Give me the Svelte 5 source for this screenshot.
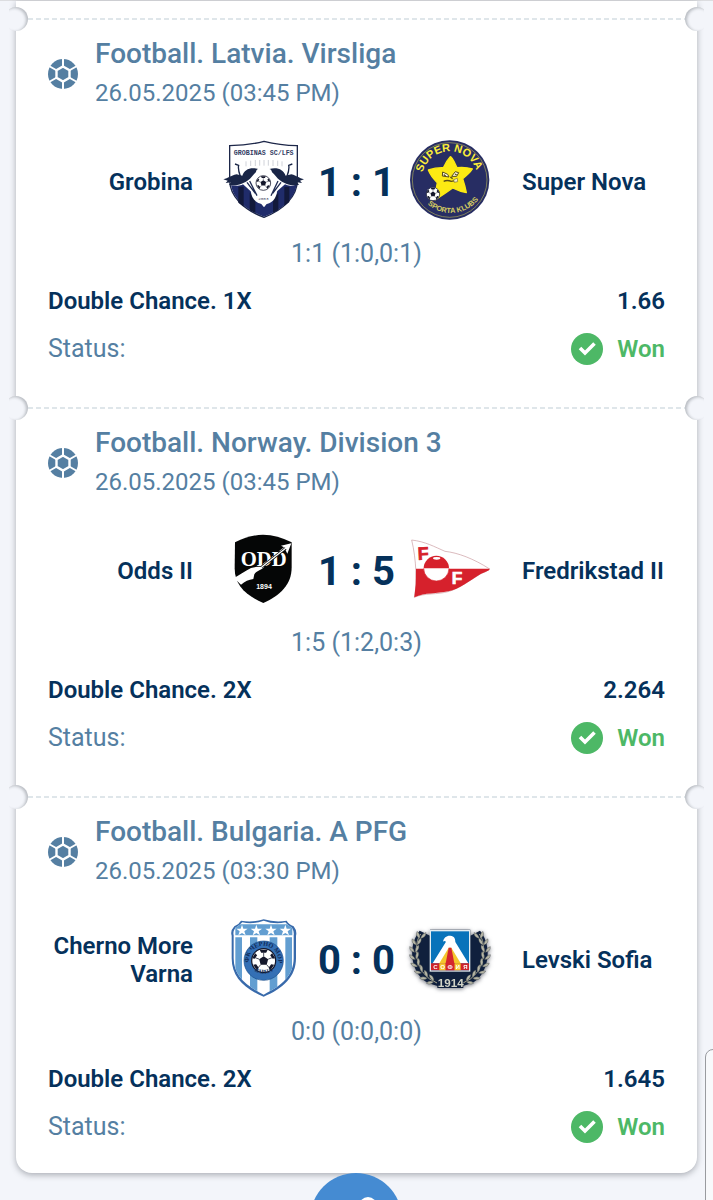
<script>
  const matches = [
    {
      league: 'Football. Latvia. Virsliga', time: '26.05.2025 (03:45 PM)',
      home: 'Grobina', away: 'Super Nova', score: '1 : 1', periods: '1:1 (1:0,0:1)',
      bet: 'Double Chance. 1X', odds: '1.66', homeCrest: 'grobina', awayCrest: 'supernova'
    },
    {
      league: 'Football. Norway. Division 3', time: '26.05.2025 (03:45 PM)',
      home: 'Odds II', away: 'Fredrikstad II', score: '1 : 5', periods: '1:5 (1:2,0:3)',
      bet: 'Double Chance. 2X', odds: '2.264', homeCrest: 'odd', awayCrest: 'fredrikstad'
    },
    {
      league: 'Football. Bulgaria. A PFG', time: '26.05.2025 (03:30 PM)',
      home: 'Cherno More Varna', away: 'Levski Sofia', score: '0 : 0', periods: '0:0 (0:0,0:0)',
      bet: 'Double Chance. 2X', odds: '1.645', homeCrest: 'cherno', awayCrest: 'levski'
    }
  ];
  const star = 'M0-17 4-5 17-5 7 3 11 15 0 8-11 15-7 3-17-5-4-5Z';
  // Laurel leaves, placed from the top of the wreath down to the year plate
  const leaves = [
    [60, 84, 5], [48, 104, -8], [42, 126, -14], [43, 148, -24], [48, 170, -36], [59, 190, -50], [75, 207, -62], [94, 219, -74]
  ];
</script>

{#snippet ball(cx, cy, r)}
  <g transform="translate({cx} {cy}) scale({r / 24})">
    <circle r="24" fill="#fff" stroke="#14172b" stroke-width="2.5" />
    <path d="M0-9 9-3 6 8-6 8-9-3Z M-8-22 8-22 5-16-5-16Z M17-15 23-5 18-4 13-11Z M-17-15-23-5-18-4-13-11Z M21 8 13 20 10 14 15 7Z M-21 8-13 20-10 14-15 7Z" fill="#14172b" />
    <path d="M0-9V-16M9-3 17-6M6 8 11 14M-6 8-11 14M-9-3-17-6" stroke="#14172b" stroke-width="1.5" />
  </g>
{/snippet}

{#snippet crest(name)}
  {#if name === 'grobina'}
    <svg class="crest" viewBox="24 30 240 240" aria-hidden="true">
      <path d="M44 47Q100 46 147 34Q194 46 247 47V150C247 200 205 240 147 262C88 240 44 200 44 150Z" fill="#fff" stroke="#1d2749" stroke-width="4" />
      <path d="M48 166C60 166 74 170 84 163L107 184L147 232L186 184L210 163C222 170 234 166 245 164C238 208 200 240 147 260C92 240 56 208 48 166Z" fill="#202c6b" />
      <path d="M70 170V218L86 230V170ZM104 188V241L121 249V203ZM174 204V248L190 240V188ZM208 170V228L223 216V170Z" fill="#12193b" />
      <path d="M107 180C109 207 124 222 147 223C170 222 184 207 187 180L181 155H114Z" fill="#fff" />
      <path d="M25 148C40 145 46 137 65 133L82 137C88 119 105 111 130 117C121 119 127 125 118 131L105 146C85 164 57 169 42 164L48 157L32 159L38 152Z" fill="#192546" />
      <path d="M267 148C252 145 246 137 229 133L212 137C205 119 188 111 163 117C172 119 167 125 176 131L189 146C209 164 235 169 252 164L246 157L261 159L255 152Z" fill="#192546" />
      <path d="M76 139Q68 117 71 106L60 102M216 139Q224 117 221 106L232 102" fill="none" stroke="#192546" stroke-width="4" />
      <path d="M96 157 121 190M104 153 126 197M198 157 173 190M189 153 168 197" stroke="#202b52" stroke-width="4" />
      <path d="M93 94V109M107 92V108M121 90V108M134 90V107M147 90V107M160 90V107M174 90V108M188 92V108M201 94V109" stroke="#b8bbc5" stroke-width="2" />
      {@render ball(145, 159, 22)}
      <text x="146" y="75" font-size="20" font-family="Liberation Mono" font-weight="700" text-anchor="middle" fill="#344064">GROBINAS SC/LFS</text>
      <text x="145" y="211" font-size="13" font-family="Liberation Mono" text-anchor="middle" fill="#454b66">2003</text>
    </svg>
  {:else if name === 'supernova'}
    <svg class="crest" viewBox="30 30 240 240" aria-hidden="true">
      <defs>
        <path id="nova-top" d="M66 136A84 84 0 0 1 231 129" />
        <path id="nova-bottom" d="M77 217A105 105 0 0 0 240 202" />
      </defs>
      <circle cx="149" cy="150" r="119" fill="#272d63" />
      <circle cx="149" cy="150" r="112" fill="none" stroke="#aaa95a" stroke-width="2" />
      <path d="M151 80C156 79 162 94 171 113Q195 110 217 117Q209 130 188 146Q195 167 199 188Q180 185 158 174Q136 190 105 210Q106 184 112 158Q92 138 85 120Q109 112 130 113Q139 93 151 80Z" fill="#fcea13" stroke="#fcea13" stroke-width="4" stroke-linejoin="round" />
      <path d="M128 126 143 133 147 141 127 138ZM155 139 166 125 176 128 170 139Z" fill="#fffce5" stroke="#524918" stroke-width="3" />
      <path d="M131 134 137 138M165 132 170 135M131 154Q141 149 154 154L169 151M151 141 158 146" fill="none" stroke="#5a4c19" stroke-width="4" />
      <path d="M161 149 172 145 173 155 163 157Z" fill="#f5efcd" stroke="#756b31" stroke-width="2" />
      {@render ball(99, 192, 20)}
      <text font-size="33" font-family="Liberation Sans" font-weight="700" fill="#fced39"><textPath href="#nova-top" startOffset="50%" text-anchor="middle">SUPER NOVA</textPath></text>
      <text font-size="22" font-family="Liberation Sans" font-weight="700" fill="#d7cf61"><textPath href="#nova-bottom" startOffset="50%" text-anchor="middle">SPORTA KLUBS</textPath></text>
    </svg>
  {:else if name === 'odd'}
    <svg class="crest" viewBox="24 27 240 240" aria-hidden="true">
      <path d="M60 67Q104 45 144 44Q188 45 230 67V142C230 193 197 226 145 249C92 226 59 196 59 145Z" fill="#050606" />
      <path d="M57 174C75 165 89 153 108 144C122 142 134 138 146 130L207 82L198 77L229 70L217 101L211 89L148 140C138 151 125 151 118 163L115 177C101 179 90 184 78 194Z" fill="#fff" />
      <text x="146" y="138" font-size="62" font-family="Liberation Serif" font-weight="700" text-anchor="middle" fill="#fff" stroke="#050606" stroke-width="5" paint-order="stroke">ODD</text>
      <path d="M140 141 212 85" stroke="#050606" stroke-width="8" />
      <path d="M140 141 214 83" stroke="#fff" stroke-width="4" />
      <text x="147" y="206" font-size="21" font-family="Liberation Sans" font-weight="700" text-anchor="middle" fill="#fff">1894</text>
    </svg>
  {:else if name === 'fredrikstad'}
    <svg class="crest" viewBox="30 27 240 240" aria-hidden="true">
      <path d="M35 60C76 65 103 80 135 94C173 98 221 116 269 147Q258 156 244 160C211 180 181 203 148 214C111 225 74 218 43 232C52 194 49 117 35 60Z" fill="#fff" stroke="#c8999d" stroke-width="2" />
      <path d="M48 146H269L267 151Q253 158 242 162C206 184 179 207 145 214C110 222 76 217 43 232Q49 192 48 146Z" fill="#d6212c" />
      <circle cx="109" cy="145" r="38" fill="#fff" />
      <path d="M71 145A38 38 0 0 1 147 145Z" fill="#d6212c" />
      <ellipse cx="110" cy="115" rx="11" ry="4" fill="#fff" />
      <path d="M71 145A38 38 0 0 0 147 145" fill="none" stroke="#d6212c" stroke-width="2" />
      <text x="54" y="120" font-size="54" font-family="Liberation Sans" font-weight="700" fill="#d6212c" stroke="#d6212c" stroke-width="2" transform="rotate(-3 54 120)">F</text>
      <text x="155" y="193" font-size="52" font-family="Liberation Sans" font-weight="700" fill="#fff" stroke="#fff" stroke-width="2">F</text>
    </svg>
  {:else if name === 'cherno'}
    <svg class="crest" viewBox="24 30 240 240" aria-hidden="true">
      <defs>
        <clipPath id="cherno-shield"><path d="M56 82Q53 71 61 59Q73 53 82 43Q114 50 146 38Q178 50 211 43Q219 53 231 59Q238 71 236 82V151C236 201 202 233 146 260C91 233 56 201 56 151Z" /></clipPath>
        <path id="cherno-top" d="M102 164A44 44 0 1 1 189 164" />
        <path id="cherno-bottom" d="M103 174A51 51 0 0 0 188 174" />
      </defs>
      <path d="M50 83Q45 69 58 55Q72 49 78 38Q112 44 146 34Q181 44 215 38Q221 49 236 55Q247 69 243 83V151C243 206 205 242 146 266C87 242 50 206 50 151Z" fill="#386aab" />
      <path d="M56 82Q53 71 61 59Q73 53 82 43Q114 50 146 38Q178 50 211 43Q219 53 231 59Q238 71 236 82V151C236 201 202 233 146 260C91 233 56 201 56 151Z" fill="#fff" />
      <g clip-path="url(#cherno-shield)" fill="#629ed1"><path d="M61 49H232V82H61ZM61 88H81V260H61ZM105 88H127V260H105ZM164 88H187V260H164ZM211 88H231V260H211Z" /></g>
      {#each [81, 124, 168, 211] as x}<path d={star} transform="translate({x} 67)" fill="#fff" />{/each}
      <circle cx="146" cy="158" r="59" fill="#3470b5" stroke="#174b8a" stroke-width="2" />
      {@render ball(146, 158, 36)}
      <text font-size="19" font-family="Liberation Serif" font-weight="700" fill="#102a57"><textPath href="#cherno-top" startOffset="50%" text-anchor="middle">ПФК ЧЕРНО МОРЕ</textPath></text>
      <text font-size="17" font-family="Liberation Serif" font-weight="700" fill="#102a57"><textPath href="#cherno-bottom" startOffset="50%" text-anchor="middle">ВАРНА</textPath></text>
    </svg>
  {:else}
    <svg class="crest levski" viewBox="30 30 240 240" aria-hidden="true">
      <path d="M59 68 90 83V65H211V83L240 68C271 105 271 168 238 208C211 247 91 247 62 208C28 168 29 105 59 68Z" fill="#10203d" />
      {#each [false, true] as flip}
        <g transform={flip ? 'translate(300 0) scale(-1 1)' : ''}>
          <path d="M62 78C41 108 46 163 72 197Q85 214 111 225" fill="none" stroke="#aaa992" stroke-width="3" />
          {#each leaves as [x, y, a]}
            <g transform="translate({x} {y}) rotate({a})" fill="#b6b6a5" stroke="#343b42" stroke-width="1">
              <path d="M0 8Q-15 0-10-13Q1-7 0 8Z" /><path d="M2 8Q4-7 17-12Q19 2 2 8Z" />
            </g>
          {/each}
        </g>
      {/each}
      <rect x="91" y="68" width="118" height="121" fill="#0873ba" stroke="#e4edf1" stroke-width="4" />
      <path d="M98 166 138 101C133 97 131 99 129 101C131 89 140 82 151 83C163 84 166 92 166 102L205 166Z" fill="#fff" />
      <path d="M118 166 146 119H154L182 166Z" fill="#f4c62c" />
      <path d="M93 166H207V187H93Z" fill="#ce242b" />
      <path d="M118 166H137V187H118ZM163 166H182V187H163Z" fill="#f4c62c" />
      <path d="M137 166 146 119H154L163 166V187H137Z" fill="#d4262e" />
      <g font-size="18" font-family="Liberation Sans" font-weight="700" text-anchor="middle" fill="#fff">
        <text x="106" y="184">С</text><text x="128" y="184">О</text><text x="150" y="184">Ф</text><text x="173" y="184">И</text><text x="196" y="184">Я</text>
      </g>
      <path d="M112 208H190V240H112Z" fill="#10203d" />
      <text x="152" y="238" font-size="35" font-family="Liberation Sans" font-weight="700" text-anchor="middle" fill="#d3d5c8">1914</text>
    </svg>
  {/if}
{/snippet}

<main>
  <div class="card">
    {#each matches as m}
      <section>
        <i class="notch left"></i>
        <i class="notch right"></i>
        <header>
          <svg class="sport" viewBox="0 0 30 30" aria-hidden="true">
            <circle cx="15" cy="15" r="15" fill="#557fa2" />
            <path d="M15-1V31M1 7 29 23M29 7 1 23" stroke="#fff" stroke-width="2" />
            <path d="M15 7.500 21.500 11.250V18.750L15 22.500 8.500 18.750V11.250Z" fill="#557fa2" stroke="#fff" stroke-width="2.400" />
          </svg>
          <div>
            <h2>{m.league}</h2>
            <time>{m.time}</time>
          </div>
        </header>
        <div class="match">
          <span class="team home">{m.home}</span>
          {@render crest(m.homeCrest)}
          <strong class="score">{m.score}</strong>
          {@render crest(m.awayCrest)}
          <span class="team">{m.away}</span>
        </div>
        <p class="periods">{m.periods}</p>
        <div class="row bet"><span>{m.bet}</span><span>{m.odds}</span></div>
        <div class="row">
          <span class="label">Status:</span>
          <span class="won">
            <svg viewBox="0 0 32 32" aria-hidden="true"><circle cx="16" cy="16" r="16" fill="#4db866" /><path d="M9 15 14 20 23.500 10.500" fill="none" stroke="#fff" stroke-width="3.600" /></svg>
            Won
          </span>
        </div>
      </section>
    {/each}
  </div>
  <button class="share" aria-label="Share">
    <svg viewBox="0 0 44 44" aria-hidden="true"><path d="M34 9 10 22 34 35" fill="none" stroke="#fff" stroke-width="4" /><g fill="#fff"><circle cx="34" cy="9" r="9" /><circle cx="10" cy="22" r="8" /><circle cx="34" cy="35" r="8" /></g></svg>
  </button>
  <aside class="edge-panel"></aside>
</main>

<style>
  :global(body) { background: #f3f5fa; }
  main {
    font-family: Roboto, sans-serif;
    font-size: 24px;
    color: #557fa2;
    padding: 0 16px 24px;
    border-top: 1px solid #dcdde0;
  }
  .card {
    background: #fff;
    padding-top: 17px;
    border-radius: 0 0 16px 16px;
    box-shadow: 0 2px 6px rgba(40, 45, 55, 0.36);
  }
  section {
    position: relative;
    padding: 18px 32px 34px;
  }
  section:last-child { padding-bottom: 22px; }
  section::before {
    content: '';
    position: absolute;
    top: 0;
    left: 12px;
    right: 12px;
    height: 2px;
    background: repeating-linear-gradient(90deg, #dfe6ea 0 5px, transparent 5px 8px);
  }
  .notch {
    position: absolute;
    top: -11px;
    width: 24px;
    height: 24px;
    border-radius: 50%;
    background: #f3f5fa;
  }
  .left { left: -12px; box-shadow: inset -2px 1px 3px rgba(40, 45, 55, 0.28); clip-path: inset(0 0 0 5px); }
  .right { right: -12px; box-shadow: inset 2px 1px 3px rgba(40, 45, 55, 0.28); clip-path: inset(0 5px 0 0); }
  header {
    display: flex;
    align-items: center;
    gap: 17px;
    height: 76px;
  }
  .sport { width: 30px; height: 30px; flex: none; }
  h2, time { display: block; margin: 0; }
  h2 { font-size: 28px; font-weight: 500; line-height: 38px; }
  time { line-height: 40px; }
  .match {
    display: grid;
    grid-template-columns: minmax(0, 1fr) 80px 107px 80px minmax(0, 1fr);
    align-items: center;
    min-height: 80px;
    margin-top: 28px;
    color: #05315b;
  }
  .crest { width: 80px; height: 80px; display: block; overflow: visible; }
  .levski { filter: drop-shadow(0 1px 2px rgba(20, 25, 40, 0.6)); }
  .team { font-weight: 600; line-height: 28px; padding: 4px 0 0 32px; }
  .home { padding: 4px 30px 0 0; text-align: right; }
  .score { padding-top: 4px; font-size: 40px; font-weight: 700; text-align: center; white-space: nowrap; }
  .periods { margin: 9px 0 0; font-size: 25px; line-height: 50px; text-align: center; }
  .label { font-size: 25px; }
  .row { display: flex; justify-content: space-between; line-height: 48px; }
  .bet { margin-top: -2px; font-weight: 600; color: #05315b; }
  .won { display: flex; align-items: center; gap: 14px; color: #4db866; font-weight: 600; }
  .won svg { width: 32px; height: 32px; }
  .share {
    position: fixed;
    left: 50%;
    bottom: -65px;
    width: 92px;
    height: 92px;
    margin-left: -47px;
    padding: 0;
    border: 0;
    border-radius: 50%;
    background: #458bd2;
    display: grid;
    place-items: center;
  }
  .share svg { width: 44px; height: 44px; }
  .edge-panel {
    position: fixed;
    right: -8px;
    bottom: -8px;
    width: 14px;
    height: 157px;
    border: 1px solid #999b9f;
    border-radius: 8px;
    background: #f8f9fb;
  }
</style>
